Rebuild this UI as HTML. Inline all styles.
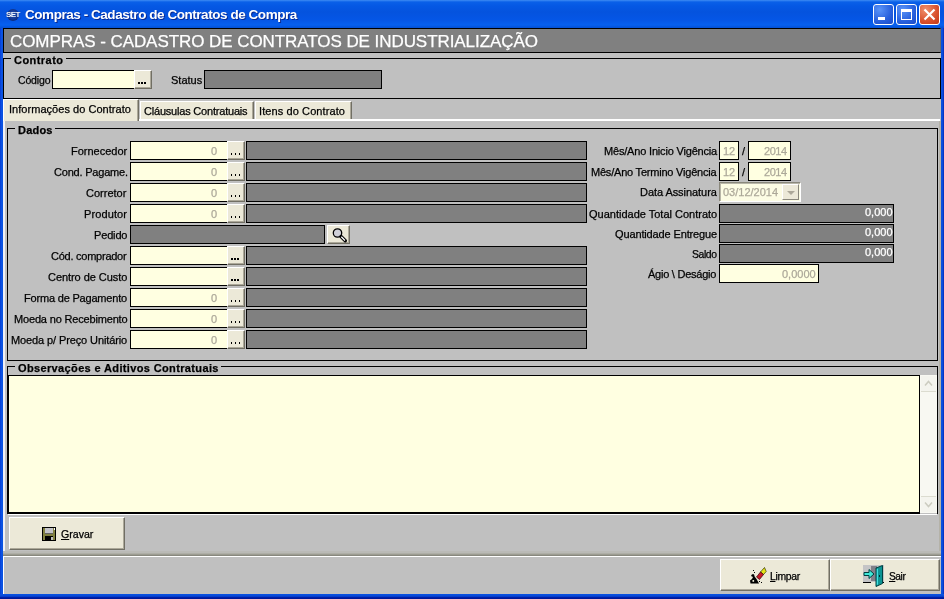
<!DOCTYPE html>
<html><head><meta charset="utf-8">
<style>
*{box-sizing:border-box;margin:0;padding:0}
html,body{width:944px;height:599px;overflow:hidden;background:#c0c0c0;font-family:"Liberation Sans",sans-serif;font-size:11px;color:#000}
.a{position:absolute}
.t{position:absolute;white-space:nowrap;transform-origin:0 0;font-size:11px;line-height:13px;will-change:transform;-webkit-text-stroke:0.25px currentColor}
.inp{position:absolute;background:#ffffe1;border:1px solid #000;height:19px}
.gry{position:absolute;background:#808080;border:1px solid #000;height:19px}
.btn{position:absolute;background:#ece9d8;border:1px solid #fff;border-right-color:#716f64;border-bottom-color:#716f64;box-shadow:inset -1px -1px 0 #aca899}
.d{position:absolute;width:1px;height:2px;background:#000;top:11px}
.db{position:absolute;width:2px;height:2px;background:#000;top:11px}
.grp{position:absolute;border:1px solid #000;}
.gl{position:absolute;background:#c0c0c0;height:13px}
.big{position:absolute;background:#ece9d8;border:1px solid #fff;border-right-color:#716f64;border-bottom-color:#716f64;box-shadow:inset -1px -1px 0 #aca899}
</style></head><body>

<div class="a" style="left:0;top:0;width:944px;height:29px;background:linear-gradient(180deg,#3f8cf3 0,#0a60e8 2px,#0558e4 6px,#0553de 12px,#0556e6 20px,#0660f0 25px,#0450d4 28px,#0340b8 29px)"></div>
<div class="a" style="left:0;top:28px;width:3px;height:571px;background:linear-gradient(90deg,#0838d0,#0a52e4 40%,#0a52e0)"></div>
<div class="a" style="left:941px;top:28px;width:3px;height:571px;background:linear-gradient(90deg,#0a52e0,#0a4cdc 50%,#0428b8)"></div>
<div class="a" style="left:0;top:594px;width:944px;height:5px;background:linear-gradient(#0a54e4 0,#0846d4 45%,#0020a8 70%,#001494 100%)"></div>
<div class="a" style="left:3px;top:556px;width:1px;height:38px;background:#fff"></div>

<div class="a" style="left:7px;top:9px;width:12px;height:12px;border-radius:6px;background:radial-gradient(circle at 50% 45%,#2a5cc0,#0c2c80 70%)"></div>
<div class="a" style="left:4px;top:10px;width:18px;height:9px;color:#f4faff;font-size:8px;font-weight:bold;line-height:9px;text-align:center;letter-spacing:-0.6px;will-change:transform;text-shadow:0 0 1px #0a2a80">SET</div>

<div class="t" id="ttl" style="left:24.5px;top:7px;letter-spacing:-0.45px;color:#fff;font-weight:bold;font-size:13.5px;line-height:16px;-webkit-text-stroke:0;text-shadow:1px 1px 0 #0a2a90">Compras - Cadastro de Contratos de Compra</div>
<div class="a" style="left:873px;top:4px;width:21px;height:21px;border:1px solid #fff;border-radius:3px;background:radial-gradient(circle at 30% 25%,#5a94f8,#2860dc 60%,#1a4ac8)">
<div class="a" style="left:4px;top:12px;width:7px;height:3px;background:#fff"></div>
</div>
<div class="a" style="left:896px;top:4px;width:21px;height:21px;border:1px solid #fff;border-radius:3px;background:radial-gradient(circle at 30% 25%,#5a94f8,#2860dc 60%,#1a4ac8)">
<div class="a" style="left:4px;top:4px;width:11px;height:11px;border:1px solid #fff;border-top:3px solid #fff"></div>
</div>
<div class="a" style="left:919px;top:4px;width:21px;height:21px;border:1px solid #fff;border-radius:3px;background:radial-gradient(circle at 30% 25%,#f0906c,#d8502c 60%,#c03818)">
<svg class="a" style="left:0;top:0" width="19" height="19"><path d="M4.5 4.5 L14.5 14.5 M14.5 4.5 L4.5 14.5" stroke="#fff" stroke-width="2.2"/></svg>
</div>
<div class="a" style="left:3px;top:28px;width:938px;height:25px;background:#808080;border:1px solid #000;border-right-color:#6c6c6c"></div>
<div class="t" id="hdr" style="left:10.0px;top:32px;letter-spacing:-0.064px;color:#fff;font-size:17px;line-height:20px">COMPRAS - CADASTRO DE CONTRATOS DE INDUSTRIALIZAÇÃO</div>
<div class="grp" style="left:3px;top:58px;width:938px;height:41px;"></div>
<div class="gl" style="left:11px;top:53px;width:55px"></div>
<div class="t" id="g1" style="left:14.0px;top:54px;letter-spacing:0.457px;font-weight:bold">Contrato</div>
<div class="t" id="cod" style="left:17.5px;top:74px;letter-spacing:-0.16px;font-size:10.5px">Código</div>
<div class="inp" style="left:52px;top:70px;width:83px"></div>
<div class="btn" style="left:134px;top:70px;width:18px;height:19px"><i class="db" style="left:3px"></i><i class="db" style="left:6px"></i><i class="db" style="left:9px"></i></div>
<div class="t" id="sta" style="left:171.0px;top:74px;">Status</div>
<div class="gry" style="left:204px;top:70px;width:178px"></div>
<div class="a" style="left:3px;top:119px;width:937px;height:2px;background:#fff"></div>
<div class="a" style="left:3px;top:121px;width:2px;height:433px;background:#f0f0f6"></div>
<div class="a" style="left:939px;top:121px;width:2px;height:433px;background:#b4b2a8"></div>
<div class="a" style="left:3px;top:99px;width:136px;height:22px;background:#ece9d8;border-top:1px solid #fff;border-left:1px solid #fff;border-right:1px solid #716f64;box-shadow:inset -1px 0 0 #aca899"></div>
<div class="a" style="left:140px;top:101px;width:114px;height:18px;background:#ece9d8;border-top:1px solid #fff;border-left:1px solid #fff;border-right:1px solid #716f64;box-shadow:inset -1px 0 0 #aca899"></div>
<div class="a" style="left:255px;top:101px;width:97px;height:18px;background:#ece9d8;border-top:1px solid #fff;border-left:1px solid #fff;border-right:1px solid #716f64;box-shadow:inset -1px 0 0 #aca899"></div>

<div class="t" id="tab1" style="left:8.5px;top:103px;letter-spacing:0.036px;">Informações do Contrato</div>
<div class="t" id="tab2" style="left:143.5px;top:105px;letter-spacing:-0.2px;">Cláusulas Contratuais</div>
<div class="t" id="tab3" style="left:259.0px;top:105px;letter-spacing:0.1px;">Itens do Contrato</div>
<div class="grp" style="left:7px;top:128px;width:931px;height:233px"></div>
<div class="gl" style="left:15px;top:123px;width:40px"></div>
<div class="t" id="g2" style="left:17.5px;top:124px;letter-spacing:0.2px;font-weight:bold">Dados</div>
<div class="t" id="l0" style="left:71.0px;top:145px;">Fornecedor</div>
<div class="inp" style="left:130px;top:141px;width:98px"></div>
<div class="t" id="z0" style="left:211.0px;top:145px;color:#aca899">0</div>
<div class="btn" style="left:227px;top:141px;width:18px;height:19px"><i class="d" style="left:3px"></i><i class="d" style="left:7px"></i><i class="d" style="left:11px"></i></div>
<div class="gry" style="left:246px;top:141px;width:341px"></div>
<div class="t" id="l1" style="left:53.5px;top:166px;letter-spacing:-0.2px;">Cond. Pagame.</div>
<div class="inp" style="left:130px;top:162px;width:98px"></div>
<div class="t" id="z1" style="left:211.0px;top:166px;color:#aca899">0</div>
<div class="btn" style="left:227px;top:162px;width:18px;height:19px"><i class="d" style="left:3px"></i><i class="d" style="left:7px"></i><i class="d" style="left:11px"></i></div>
<div class="gry" style="left:246px;top:162px;width:341px"></div>
<div class="t" id="l2" style="left:86.0px;top:187px;">Corretor</div>
<div class="inp" style="left:130px;top:183px;width:98px"></div>
<div class="t" id="z2" style="left:211.0px;top:187px;color:#aca899">0</div>
<div class="btn" style="left:227px;top:183px;width:18px;height:19px"><i class="d" style="left:3px"></i><i class="d" style="left:7px"></i><i class="d" style="left:11px"></i></div>
<div class="gry" style="left:246px;top:183px;width:341px"></div>
<div class="t" id="l3" style="left:83.5px;top:208px;letter-spacing:0.114px;">Produtor</div>
<div class="inp" style="left:130px;top:204px;width:98px"></div>
<div class="t" id="z3" style="left:211.0px;top:208px;color:#aca899">0</div>
<div class="btn" style="left:227px;top:204px;width:18px;height:19px"><i class="d" style="left:3px"></i><i class="d" style="left:7px"></i><i class="d" style="left:11px"></i></div>
<div class="gry" style="left:246px;top:204px;width:341px"></div>
<div class="t" id="l4" style="left:93.5px;top:229px;letter-spacing:-0.16px;">Pedido</div>
<div class="gry" style="left:130px;top:225px;width:195px"></div>
<div class="btn" style="left:327px;top:225px;width:23px;height:19px"><svg class="a" style="left:0;top:0" width="21" height="18"><circle cx="9.5" cy="7" r="4.2" fill="#d0d0d8" stroke="#000" stroke-width="1.3"/><path d="M13 10.5 L17.3 14.8" stroke="#000" stroke-width="3.4" stroke-linecap="round"/><path d="M13.3 10.8 L17 14.5" stroke="#fff" stroke-width="1.3"/></svg></div>
<div class="t" id="l5" style="left:51.0px;top:250px;letter-spacing:-0.247px;">Cód. comprador</div>
<div class="inp" style="left:130px;top:246px;width:98px"></div>
<div class="btn" style="left:227px;top:246px;width:18px;height:19px"><i class="db" style="left:3px"></i><i class="db" style="left:6px"></i><i class="db" style="left:9px"></i></div>
<div class="gry" style="left:246px;top:246px;width:341px"></div>
<div class="t" id="l6" style="left:47.5px;top:271px;letter-spacing:-0.057px;">Centro de Custo</div>
<div class="inp" style="left:130px;top:267px;width:98px"></div>
<div class="btn" style="left:227px;top:267px;width:18px;height:19px"><i class="db" style="left:3px"></i><i class="db" style="left:6px"></i><i class="db" style="left:9px"></i></div>
<div class="gry" style="left:246px;top:267px;width:341px"></div>
<div class="t" id="l7" style="left:24.0px;top:292px;letter-spacing:-0.188px;">Forma de Pagamento</div>
<div class="inp" style="left:130px;top:288px;width:98px"></div>
<div class="t" id="z7" style="left:211.0px;top:292px;color:#aca899">0</div>
<div class="btn" style="left:227px;top:288px;width:18px;height:19px"><i class="d" style="left:3px"></i><i class="d" style="left:7px"></i><i class="d" style="left:11px"></i></div>
<div class="gry" style="left:246px;top:288px;width:341px"></div>
<div class="t" id="l8" style="left:14.0px;top:313px;letter-spacing:-0.168px;">Moeda no Recebimento</div>
<div class="inp" style="left:130px;top:309px;width:98px"></div>
<div class="t" id="z8" style="left:211.0px;top:313px;color:#aca899">0</div>
<div class="btn" style="left:227px;top:309px;width:18px;height:19px"><i class="d" style="left:3px"></i><i class="d" style="left:7px"></i><i class="d" style="left:11px"></i></div>
<div class="gry" style="left:246px;top:309px;width:341px"></div>
<div class="t" id="l9" style="left:10.5px;top:334px;letter-spacing:-0.109px;">Moeda p/ Preço Unitário</div>
<div class="inp" style="left:130px;top:330px;width:98px"></div>
<div class="t" id="z9" style="left:211.0px;top:334px;color:#aca899">0</div>
<div class="btn" style="left:227px;top:330px;width:18px;height:19px"><i class="d" style="left:3px"></i><i class="d" style="left:7px"></i><i class="d" style="left:11px"></i></div>
<div class="gry" style="left:246px;top:330px;width:341px"></div>
<div class="t" id="r0" style="left:603.5px;top:145px;letter-spacing:-0.181px;">Mês/Ano Inicio Vigência</div>
<div class="t" id="r1" style="left:591.0px;top:166px;letter-spacing:-0.209px;">Mês/Ano Termino Vigência</div>
<div class="t" id="r2" style="left:639.5px;top:186px;letter-spacing:-0.057px;">Data Assinatura</div>
<div class="t" id="r3" style="left:589.0px;top:208px;">Quantidade Total Contrato</div>
<div class="t" id="r4" style="left:614.5px;top:228px;letter-spacing:-0.133px;">Quantidade Entregue</div>
<div class="t" id="r5" style="left:692.0px;top:248px;letter-spacing:-0.4px;font-size:10.4px">Saldo</div>
<div class="t" id="r6" style="left:648.0px;top:268px;letter-spacing:-0.247px;">Ágio \ Deságio</div>
<div class="inp" style="left:719px;top:141px;width:20px"></div>
<div class="t" id="m0" style="left:723.0px;top:145px;color:#aca899">12</div>
<div class="t" id="s0" style="left:742.0px;top:145px;">/</div>
<div class="inp" style="left:748px;top:141px;width:43px"></div>
<div class="t" id="y0" style="left:764.0px;top:145px;letter-spacing:-0.45px;color:#aca899">2014</div>
<div class="inp" style="left:719px;top:162px;width:20px"></div>
<div class="t" id="m1" style="left:723.0px;top:166px;color:#aca899">12</div>
<div class="t" id="s1" style="left:742.0px;top:166px;">/</div>
<div class="inp" style="left:748px;top:162px;width:43px"></div>
<div class="t" id="y1" style="left:764.0px;top:166px;letter-spacing:-0.45px;color:#aca899">2014</div>
<div class="a" style="left:719px;top:182px;width:82px;height:20px;background:#fcfce4;border:1px solid #8a887c;border-right-color:#fff;border-bottom-color:#fff;box-shadow:inset 1px 1px 0 #b8b6a8"></div>
<div class="a" style="left:782px;top:184px;width:17px;height:16px;background:#ece9d8;border:1px solid #fff;border-right-color:#8a887c;border-bottom-color:#8a887c"><div class="a" style="left:4px;top:6px;width:0;height:0;border:4px solid transparent;border-top:4px solid #aca899;border-bottom:none"></div></div>
<div class="t" id="dt" style="left:723.0px;top:186px;color:#aca899">03/12/2014</div>
<div class="gry" style="left:719px;top:204px;width:175px"></div>
<div class="t" id="q0" style="left:865.0px;top:206px;color:#fff">0,000</div>
<div class="gry" style="left:719px;top:224px;width:175px"></div>
<div class="t" id="q1" style="left:865.0px;top:226px;color:#fff">0,000</div>
<div class="gry" style="left:719px;top:244px;width:175px"></div>
<div class="t" id="q2" style="left:865.0px;top:246px;color:#fff">0,000</div>
<div class="inp" style="left:719px;top:264px;width:100px"></div>
<div class="t" id="ag" style="left:782.0px;top:268px;color:#aca899">0,0000</div>
<div class="grp" style="left:7px;top:366px;width:931px;height:148px;border-bottom:none"></div>
<div class="gl" style="left:15px;top:361px;width:206px"></div>
<div class="t" id="g3" style="left:17.5px;top:362px;letter-spacing:0.363px;font-weight:bold">Observações e Aditivos Contratuais</div>
<div class="a" style="left:8px;top:375px;width:912px;height:139px;background:#ffffe1;border:1px solid #000;border-bottom:2px solid #000"></div>
<div class="a" style="left:920px;top:375px;width:17px;height:138px;background:#f8f8f2"></div>
<div class="a" style="left:8px;top:514px;width:929px;height:1px;background:#fff"></div>
<div class="a" style="left:921px;top:376px;width:15px;height:16px;background:#f4f4ee;border-bottom:1px solid #dcdcd0"><svg width="15" height="15"><path d="M4 9.5 L7.5 5.5 L11 9.5" stroke="#ccccc0" stroke-width="1.5" fill="none"/></svg></div>
<div class="a" style="left:921px;top:496px;width:15px;height:16px;background:#f4f4ee;border-top:1px solid #dcdcd0"><svg width="15" height="15"><path d="M4 5.5 L7.5 9.5 L11 5.5" stroke="#ccccc0" stroke-width="1.5" fill="none"/></svg></div>

<div class="big" style="left:9px;top:517px;width:116px;height:33px"></div>
<svg class="a" style="left:42px;top:527px" width="14" height="14"><rect x="0" y="0" width="14" height="14" fill="#000"/><rect x="1" y="1" width="2" height="12" fill="#808040"/><rect x="11" y="1" width="2" height="12" fill="#808040"/><rect x="3" y="7" width="8" height="2" fill="#808040"/><rect x="3" y="1" width="8" height="5.5" fill="#c4c4c8"/><rect x="12" y="1" width="1" height="2" fill="#fff"/><rect x="9" y="10" width="2" height="3" fill="#c0c0c0"/></svg>
<div class="a" style="left:3px;top:551px;width:938px;height:2px;background:#babab6"></div>
<div class="a" style="left:3px;top:553px;width:938px;height:1px;background:#aeaea6"></div>
<div class="a" style="left:3px;top:554px;width:938px;height:1px;background:#9c9c92"></div>
<div class="a" style="left:3px;top:555px;width:938px;height:1px;background:#88887e"></div>
<div class="a" style="left:3px;top:556px;width:938px;height:1px;background:#fff"></div>
<div class="big" style="left:720px;top:559px;width:110px;height:32px"></div>
<div class="big" style="left:830px;top:559px;width:110px;height:32px"></div>

<svg class="a" style="left:749px;top:566px" width="19" height="19">
<path d="M15.5 1.5 L17.2 5.5 L14.5 8.5 L11.5 6 Z" fill="#e4e418" stroke="#303000" stroke-width="0.7"/>
<path d="M11.5 6 L14.5 8.5 L10.5 13.5 L7.5 11 Z" fill="#c81828" stroke="#300000" stroke-width="0.7"/>
<path d="M1 14.5 L3 13 L4 11 L2 10 L3 8.3 L5 8.3 L5.6 10.5 L7.5 13 L10 17.6 L1.5 17.6 Z" fill="#000"/>
<rect x="3.5" y="14" width="1.6" height="1.8" fill="#ece9d8"/>
<rect x="4" y="4" width="1" height="1" fill="#000"/><rect x="5" y="6" width="1" height="1" fill="#000"/><rect x="10" y="15" width="1" height="1" fill="#000"/><rect x="12" y="16" width="1" height="1" fill="#000"/>
</svg>
<svg class="a" style="left:862px;top:564px" width="23" height="24">
<rect x="1" y="1" width="21" height="17" fill="#c4c4c6"/>
<rect x="9" y="2" width="6" height="15" fill="#80808a"/>
<rect x="1" y="18" width="8" height="1" fill="#000"/><rect x="20" y="18" width="2" height="1" fill="#000"/>
<path d="M14 4 L20.5 1.5 L20.5 19.5 L14 22.5 Z" fill="#0c9494" stroke="#004040" stroke-width="1"/>
<path d="M14.8 5 L16 4.6 L16 20.6 L14.8 21.1 Z" fill="#40e0e0"/>
<rect x="17" y="11" width="1" height="2" fill="#003030"/>
<path d="M2 8.5 L7 8.5 L7 5.5 L12 10 L7 14.5 L7 11.5 L2 11.5 Z" fill="#40e8d8" stroke="#004040" stroke-width="1"/>
</svg>
<div class="t" id="b1" style="left:61.0px;top:528px;font-size:10.6px"><u>G</u>ravar</div>
<div class="t" id="b2" style="left:770.0px;top:570px;letter-spacing:-0.32px;font-size:10.4px"><u>L</u>impar</div>
<div class="t" id="b3" style="left:889.0px;top:570px;letter-spacing:-0.45px;font-size:10.2px"><u>S</u>air</div>
</body></html>
